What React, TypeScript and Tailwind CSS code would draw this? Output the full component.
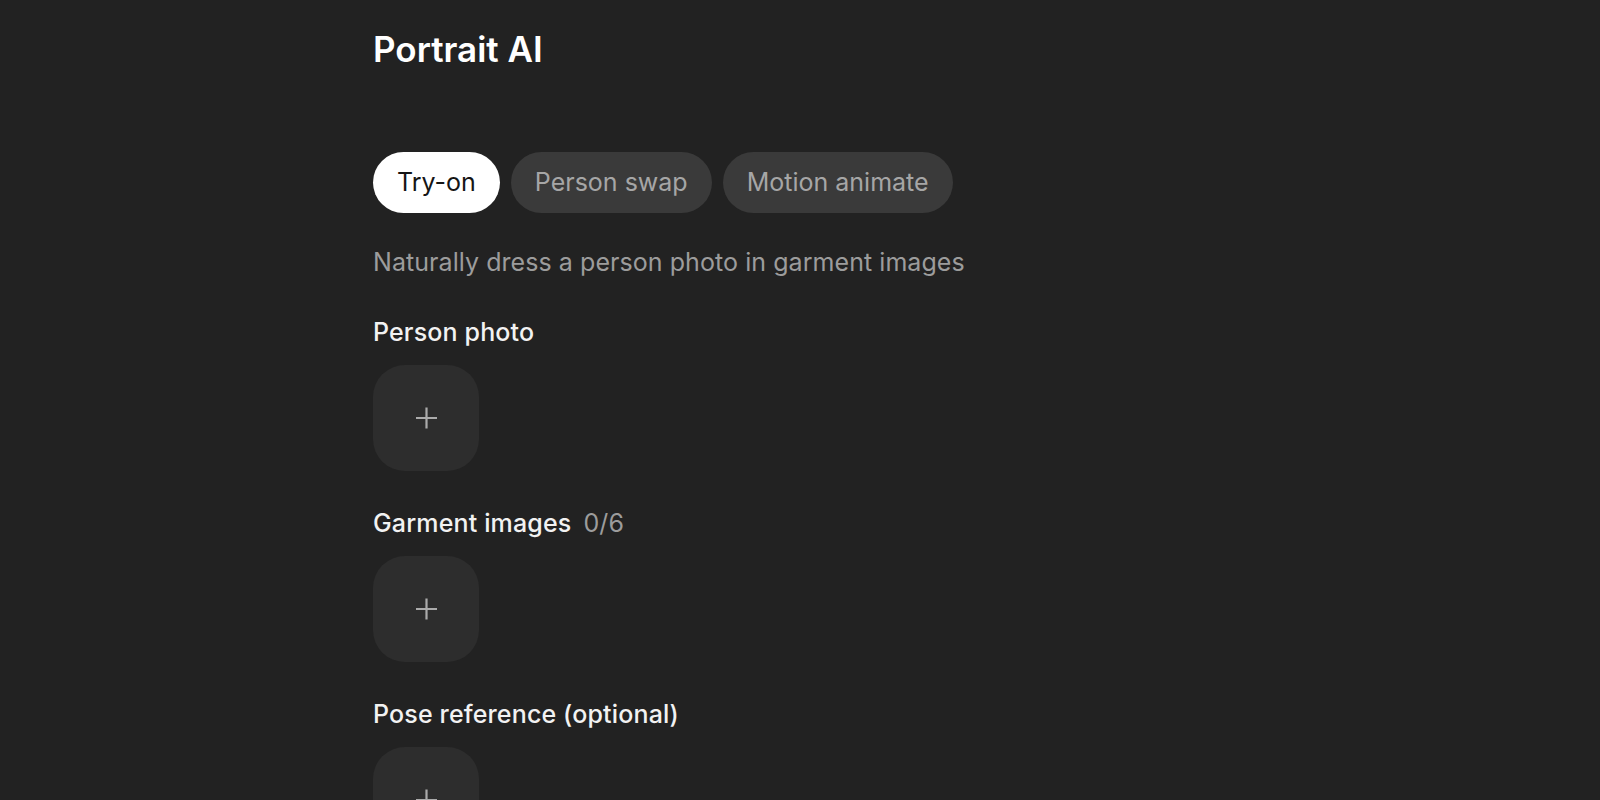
import { useState } from 'react';

const tabs = ['Try-on', 'Person swap', 'Motion animate'];

function UploadTile() {
  return (
    <button
      type="button"
      className="flex h-[106px] w-[106px] items-center justify-center rounded-[32px] bg-[#2d2d2d] text-[#ababab]"
    >
      <svg width="21" height="22" viewBox="0 0 21 22" fill="none">
        <path d="M10.5 0.5v21M0 11h21" stroke="currentColor" strokeWidth="2.2" />
      </svg>
    </button>
  );
}

function Section({ label, count }: { label: string; count?: string }) {
  return (
    <div className="flex flex-col">
      <div className="flex items-center gap-[12px] text-[25px] leading-[32px] font-medium tracking-[0.15px] text-[#f2f2f2]">
        <span>{label}</span>
        {count && <span className="font-normal text-[#9c9c9c]">{count}</span>}
      </div>
      <div className="mt-[17px]">
        <UploadTile />
      </div>
    </div>
  );
}

export default function App() {
  const [active, setActive] = useState(0);

  return (
    <div
      className="min-h-screen bg-[#222222] text-white"
      style={{ fontFamily: 'Inter, "Noto Sans", sans-serif' }}
    >
      <div className="mx-auto w-[854px] pt-[29px] pb-10">
        <h1 className="text-[35px] leading-[40px] font-semibold text-white">
          Portrait AI
        </h1>

        {/* Mode tabs */}
        <div className="mt-[83px] flex gap-[11px]">
          {tabs.map((t, i) => (
            <button
              key={t}
              type="button"
              onClick={() => setActive(i)}
              className={
                i === active
                  ? 'h-[61px] rounded-full bg-white px-[24px] text-[25px] text-[#151515]'
                  : 'h-[61px] rounded-full bg-[#3a3a3a] px-[24px] text-[25px] text-[#a6a6a6]'
              }
            >
              {t}
            </button>
          ))}
        </div>

        <p className="mt-[31px] text-[25px] leading-[36px] tracking-[0.06px] text-[#9c9c9c]">
          Naturally dress a person photo in garment images
        </p>

        <div className="mt-[36px] flex flex-col gap-[36px]">
          <Section label="Person photo" />
          <Section label="Garment images" count="0/6" />
          <Section label="Pose reference (optional)" />
        </div>
      </div>
    </div>
  );
}
